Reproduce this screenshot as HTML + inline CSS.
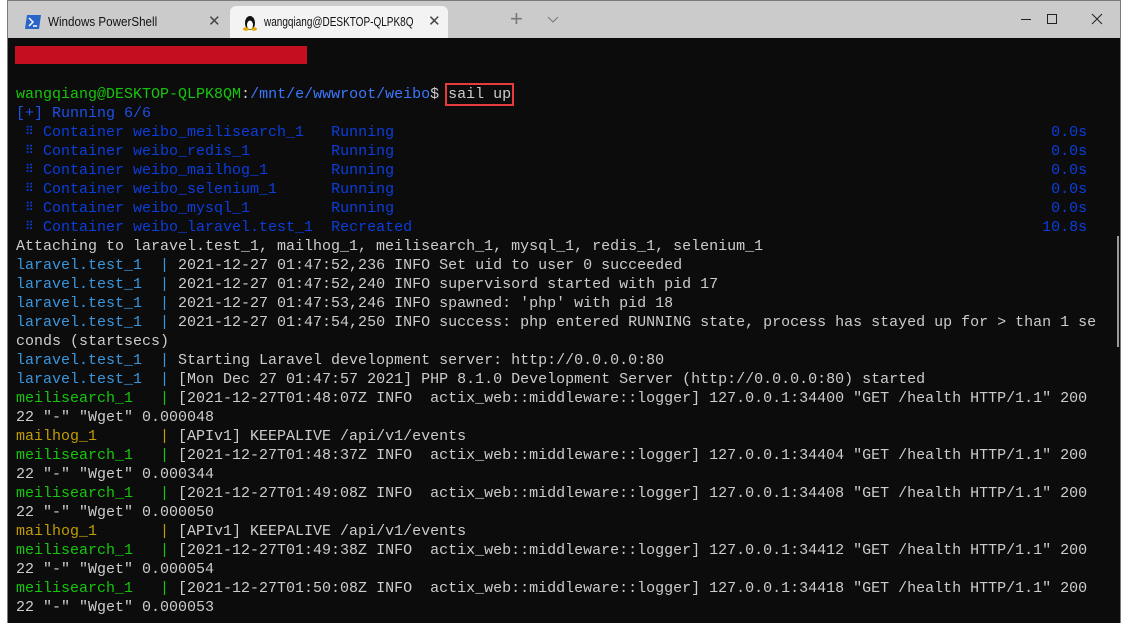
<!DOCTYPE html>
<html><head><meta charset="utf-8"><style>
*{margin:0;padding:0;box-sizing:border-box}
body{width:1129px;height:631px;background:#fff;position:relative;overflow:hidden;font-family:"Liberation Sans",sans-serif}
.win{position:absolute;left:7px;top:0;width:1114px;height:623px;border:1px solid #7a7a7a;border-bottom:none;background:#0c0c0c}
.tb{position:absolute;left:0;top:0;width:100%;height:37px;background:#cbcbcb}
.tab{position:absolute;top:5px;height:32px;font-size:12.5px;color:#111;line-height:32px;white-space:nowrap}
.t1{left:0;width:222px;padding-left:40px}
.t2{left:222px;width:218px;background:#f3f3f3;border-radius:6px 6px 0 0;padding-left:34px;overflow:hidden}
.sx{display:inline-block;transform:scaleX(0.8);transform-origin:0 50%}
.x{position:absolute;top:0;font-size:15px;color:#444}
pre{position:absolute;left:8px;top:9px;font-family:"Liberation Mono","DejaVu Sans Mono",monospace;font-size:15px;line-height:19px;color:#cccccc;white-space:pre}
.g{color:#16c60c}.b{color:#3b78ff}.d{color:#1f4fe6}.c{color:#0b3ddc}.l{color:#3a96dd}.y{color:#c19c00}
.red{position:absolute;left:7px;top:8px;width:292px;height:18px;background:#c50f1f}
.box{outline:2px solid #e83a3a;outline-offset:1px}
.sb{position:absolute;left:1109px;top:235px;width:2px;height:111px;background:#999}
.br{display:inline-block;width:9px;overflow:hidden;vertical-align:top;font-size:12px}
</style></head><body>
<div class="win">
<div class="tb">
 <div class="tab t1"><svg style="position:absolute;left:17px;top:9px" width="16" height="14"><path d="M2 0h14l-2 14H0z" fill="#2a64c8"/><path d="M4 3l4 4-4 4" stroke="#fff" stroke-width="1.5" fill="none"/><path d="M8 11h4" stroke="#fff" stroke-width="1.5"/></svg><span class="sx" style="transform:scaleX(0.93)">Windows PowerShell</span><span class="x" style="left:200px">✕</span></div>
 <div class="tab t2"><svg style="position:absolute;left:13px;top:7px" width="14" height="18"><ellipse cx="7" cy="10" rx="5" ry="7" fill="#111"/><ellipse cx="7" cy="12" rx="3" ry="4.5" fill="#fff"/><ellipse cx="3" cy="16" rx="3" ry="1.8" fill="#e0a800"/><ellipse cx="11" cy="16" rx="3" ry="1.8" fill="#e0a800"/></svg><span class="sx">wangqiang@DESKTOP-QLPK8Q</span><span class="x" style="left:198px">✕</span></div>
 <span style="position:absolute;left:502px;top:5px;font-size:22px;color:#777;font-weight:300">+</span>
 <svg style="position:absolute;left:539px;top:15px" width="12" height="7"><path d="M1 1l5 5 5-5" stroke="#777" fill="none"/></svg>
 <div style="position:absolute;left:1013px;top:18px;width:10px;height:1px;background:#222"></div>
 <div style="position:absolute;left:1039px;top:13px;width:10px;height:10px;border:1px solid #222"></div>
 <svg style="position:absolute;left:1083px;top:12px" width="12" height="12"><path d="M1 1l10 10M11 1L1 11" stroke="#222"/></svg>
</div>
<div style="position:absolute;left:0;top:37px;width:100%;height:586px;overflow:hidden">
<div class="red"></div>
<pre>


<span class="g">wangqiang@DESKTOP-QLPK8QM</span>:<span class="b">/mnt/e/wwwroot/weibo</span>$ <span class="box">sail up</span>
<span class="d">[+] Running 6/6</span>
<span class="c"> <span class="br">⠿</span> Container weibo_meilisearch_1   Running                                                                         0.0s
 <span class="br">⠿</span> Container weibo_redis_1         Running                                                                         0.0s
 <span class="br">⠿</span> Container weibo_mailhog_1       Running                                                                         0.0s
 <span class="br">⠿</span> Container weibo_selenium_1      Running                                                                         0.0s
 <span class="br">⠿</span> Container weibo_mysql_1         Running                                                                         0.0s
 <span class="br">⠿</span> Container weibo_laravel.test_1  Recreated                                                                      10.8s</span>
Attaching to laravel.test_1, mailhog_1, meilisearch_1, mysql_1, redis_1, selenium_1
<span class="l">laravel.test_1  |</span> 2021-12-27 01:47:52,236 INFO Set uid to user 0 succeeded
<span class="l">laravel.test_1  |</span> 2021-12-27 01:47:52,240 INFO supervisord started with pid 17
<span class="l">laravel.test_1  |</span> 2021-12-27 01:47:53,246 INFO spawned: 'php' with pid 18
<span class="l">laravel.test_1  |</span> 2021-12-27 01:47:54,250 INFO success: php entered RUNNING state, process has stayed up for > than 1 se
conds (startsecs)
<span class="l">laravel.test_1  |</span> Starting Laravel development server: http://0.0.0.0:80
<span class="l">laravel.test_1  |</span> [Mon Dec 27 01:47:57 2021] PHP 8.1.0 Development Server (http://0.0.0.0:80) started
<span class="g">meilisearch_1   |</span> [2021-12-27T01:48:07Z INFO  actix_web::middleware::logger] 127.0.0.1:34400 "GET /health HTTP/1.1" 200
22 "-" "Wget" 0.000048
<span class="y">mailhog_1       |</span> [APIv1] KEEPALIVE /api/v1/events
<span class="g">meilisearch_1   |</span> [2021-12-27T01:48:37Z INFO  actix_web::middleware::logger] 127.0.0.1:34404 "GET /health HTTP/1.1" 200
22 "-" "Wget" 0.000344
<span class="g">meilisearch_1   |</span> [2021-12-27T01:49:08Z INFO  actix_web::middleware::logger] 127.0.0.1:34408 "GET /health HTTP/1.1" 200
22 "-" "Wget" 0.000050
<span class="y">mailhog_1       |</span> [APIv1] KEEPALIVE /api/v1/events
<span class="g">meilisearch_1   |</span> [2021-12-27T01:49:38Z INFO  actix_web::middleware::logger] 127.0.0.1:34412 "GET /health HTTP/1.1" 200
22 "-" "Wget" 0.000054
<span class="g">meilisearch_1   |</span> [2021-12-27T01:50:08Z INFO  actix_web::middleware::logger] 127.0.0.1:34418 "GET /health HTTP/1.1" 200
22 "-" "Wget" 0.000053</pre>
</div>
<div class="sb"></div>
</div>
</body></html>
